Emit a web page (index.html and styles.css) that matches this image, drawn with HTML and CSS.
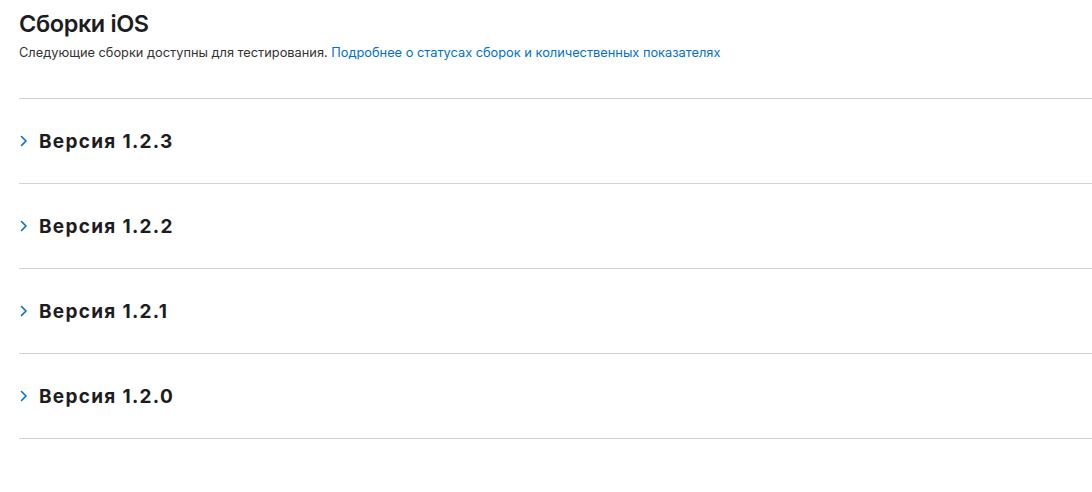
FILE: index.html
```html
<!DOCTYPE html>
<html lang="ru">
<head>
<meta charset="utf-8">
<link rel="stylesheet" href="styles.css">
</head>
<body>
<div class="page">
  <h1 class="title">Сборки iOS</h1>
  <p class="subtitle">Следующие сборки доступны для тестирования. <a class="link" href="#">Подробнее о статусах сборок и количественных показателях</a></p>
  <ul class="versions">
    <li class="row"><svg class="chev" width="8" height="12" viewBox="0 0 8 12"><path d="M1.5 1.5 L6 6 L1.5 10.5" fill="none" stroke="#0070c9" stroke-width="1.6" stroke-linecap="round" stroke-linejoin="round"/></svg><span class="ver">Версия 1.2.3</span></li>
    <li class="row"><svg class="chev" width="8" height="12" viewBox="0 0 8 12"><path d="M1.5 1.5 L6 6 L1.5 10.5" fill="none" stroke="#0070c9" stroke-width="1.6" stroke-linecap="round" stroke-linejoin="round"/></svg><span class="ver">Версия 1.2.2</span></li>
    <li class="row"><svg class="chev" width="8" height="12" viewBox="0 0 8 12"><path d="M1.5 1.5 L6 6 L1.5 10.5" fill="none" stroke="#0070c9" stroke-width="1.6" stroke-linecap="round" stroke-linejoin="round"/></svg><span class="ver">Версия 1.2.1</span></li>
    <li class="row"><svg class="chev" width="8" height="12" viewBox="0 0 8 12"><path d="M1.5 1.5 L6 6 L1.5 10.5" fill="none" stroke="#0070c9" stroke-width="1.6" stroke-linecap="round" stroke-linejoin="round"/></svg><span class="ver">Версия 1.2.0</span></li>
  </ul>
</div>
</body>
</html>
```
FILE: styles.css
```css
html, body { margin: 0; padding: 0; background: #fff; }
body { font-family: Inter, "Noto Sans", sans-serif; color: #1d1d1f; }
.page { padding: 9px 0 0 19px; }
.title { margin: 0; font-size: 23.5px; font-weight: 600; line-height: 30px; letter-spacing: -0.4px; }
.subtitle { margin: 6px 0 0; font-size: 12.8px; line-height: 16px; color: #333; }
.link { color: #0070c9; text-decoration: none; }
.versions { list-style: none; margin: 37px 0 0; padding: 0; border-top: 1px solid #d2d2d7; }
.row { height: 84px; display: flex; align-items: center; border-bottom: 1px solid #d2d2d7; }
.chev { margin-left: 1px; margin-right: 11px; flex: none; }
.ver { font-size: 19px; font-weight: 700; letter-spacing: 1.3px; }
```
